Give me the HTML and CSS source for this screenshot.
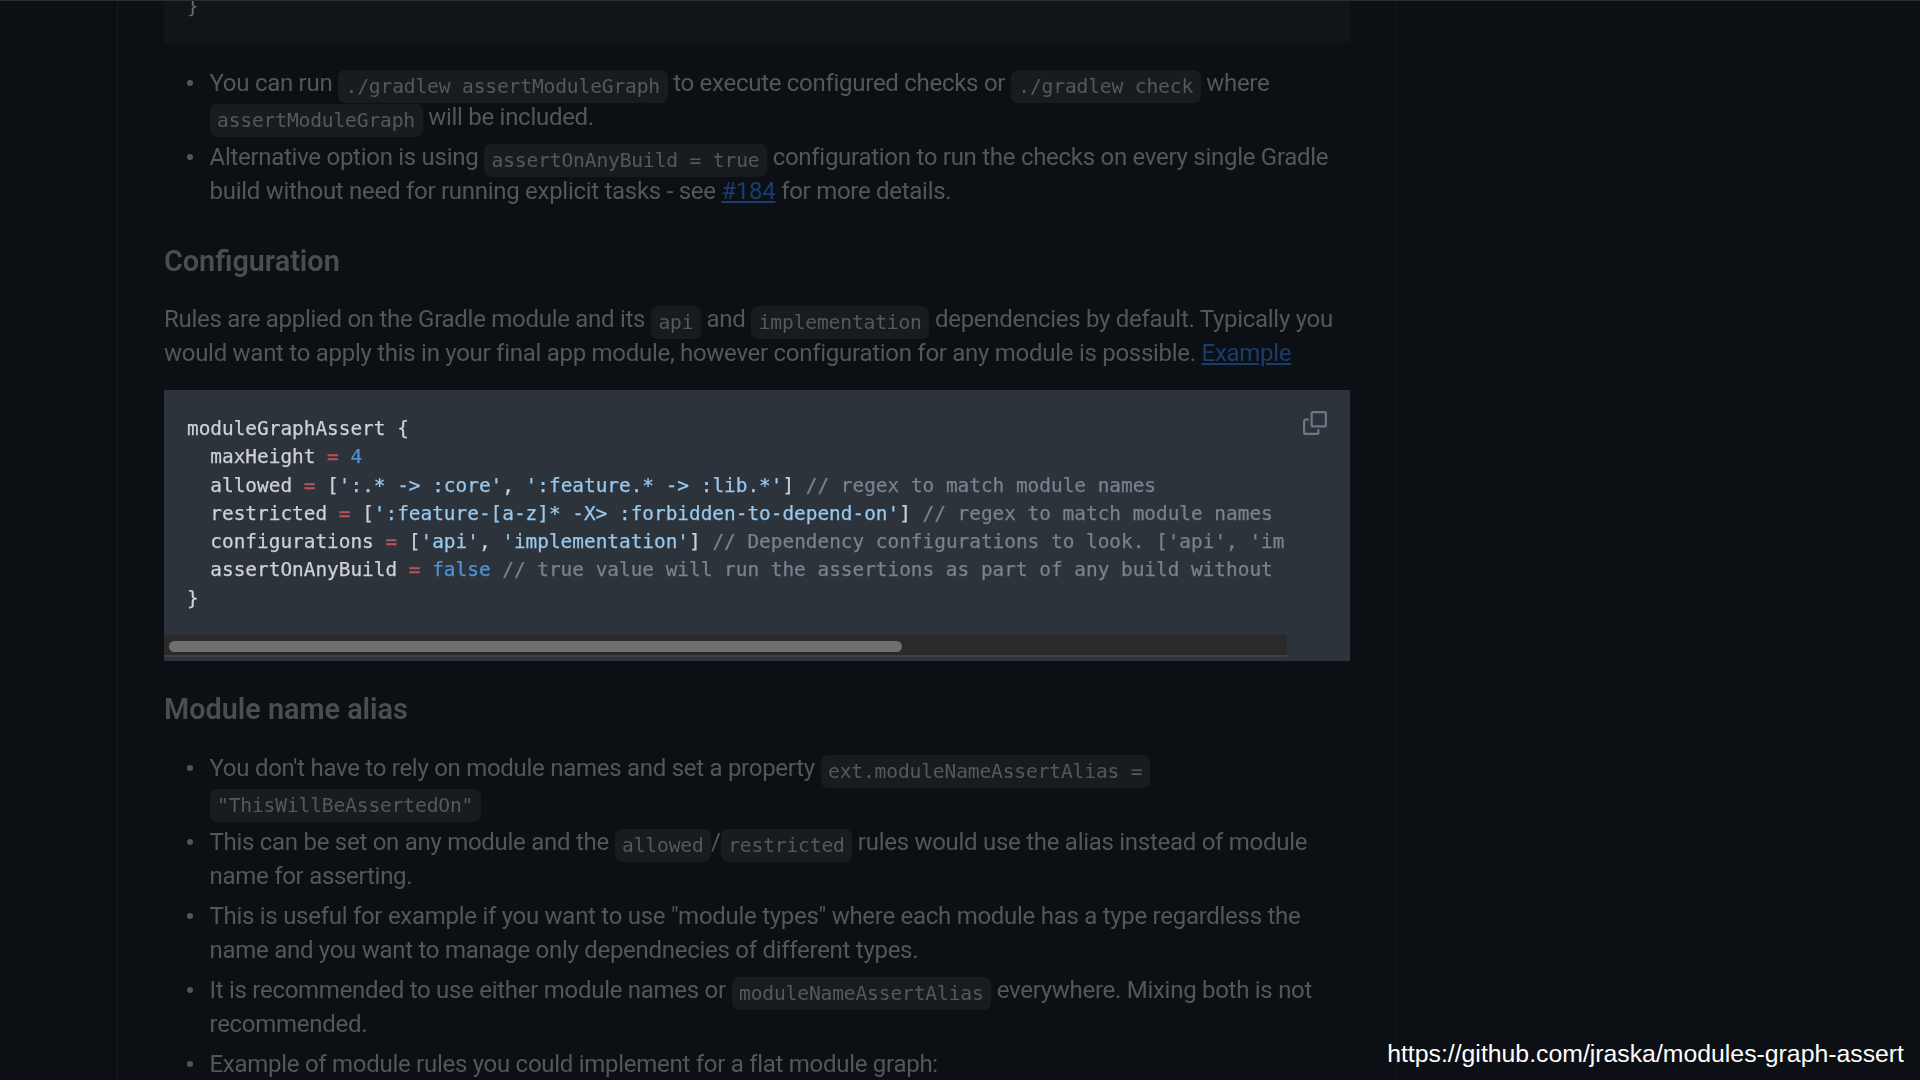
FILE: index.html
```html
<!DOCTYPE html>
<html lang="en">
<head>
<meta charset="utf-8">
<title>modules-graph-assert</title>
<link rel="stylesheet" href="styles.css">
</head>
<body>
<div class="frame">
  <main class="doc">
    <div class="prev-code"><span>}</span></div>
    <ul class="list first">
      <li>You can run <code>./gradlew assertModuleGraph</code> to execute configured checks or <code>./gradlew check</code> where<br><code>assertModuleGraph</code> will be included.</li>
      <li>Alternative option is using <code>assertOnAnyBuild = true</code> configuration to run the checks on every single Gradle<br>build without need for running explicit tasks - see <a href="#">#184</a> for more details.</li>
    </ul>
    <h2 class="heading config">Configuration</h2>
    <p class="para">Rules are applied on the Gradle module and its <code>api</code> and <code>implementation</code> dependencies by default. Typically you<br>would want to apply this in your final app module, however configuration for any module is possible. <a href="#">Example</a></p>
    <div class="block">
      <div class="scroller">
<pre class="src">moduleGraphAssert {
  maxHeight <span class="op">=</span> <span class="num">4</span>
  allowed <span class="op">=</span> [<span class="str">':.* -&gt; :core'</span>, <span class="str">':feature.* -&gt; :lib.*'</span>] <span class="com">// regex to match module names</span>
  restricted <span class="op">=</span> [<span class="str">':feature-[a-z]* -X&gt; :forbidden-to-depend-on'</span>] <span class="com">// regex to match module names</span>
  configurations <span class="op">=</span> [<span class="str">'api'</span>, <span class="str">'implementation'</span>] <span class="com">// Dependency configurations to look. ['api', 'im</span>
  assertOnAnyBuild <span class="op">=</span> <span class="num">false</span> <span class="com">// true value will run the assertions as part of any build without</span>
}</pre>
        <div class="track"><div class="thumb"></div></div>
      </div>
      <svg class="copy" viewBox="0 0 16 16" width="24" height="24" aria-hidden="true">
        <path d="M0 6.75C0 5.784.784 5 1.75 5h1.5a.75.75 0 0 1 0 1.5h-1.5a.25.25 0 0 0-.25.25v7.5c0 .138.112.25.25.25h7.5a.25.25 0 0 0 .25-.25v-1.5a.75.75 0 0 1 1.5 0v1.5A1.75 1.75 0 0 1 9.25 16h-7.5A1.75 1.75 0 0 1 0 14.25Z"/>
        <path d="M5 1.75C5 .784 5.784 0 6.75 0h7.5C15.216 0 16 .784 16 1.75v7.5A1.75 1.75 0 0 1 14.25 11h-7.5A1.75 1.75 0 0 1 5 9.25Zm1.75-.25a.25.25 0 0 0-.25.25v7.5c0 .138.112.25.25.25h7.5a.25.25 0 0 0 .25-.25v-7.5a.25.25 0 0 0-.25-.25Z"/>
      </svg>
    </div>
    <h2 class="heading alias">Module name alias</h2>
    <ul class="list">
      <li>You don't have to rely on module names and set a property <code>ext.moduleNameAssertAlias =</code><br><code>"ThisWillBeAssertedOn"</code></li>
      <li>This can be set on any module and the <code>allowed</code>/<code>restricted</code> rules would use the alias instead of module<br>name for asserting.</li>
      <li>This is useful for example if you want to use "module types" where each module has a type regardless the<br>name and you want to manage only dependnecies of different types.</li>
      <li>It is recommended to use either module names or <code>moduleNameAssertAlias</code> everywhere. Mixing both is not<br>recommended.</li>
      <li>Example of module rules you could implement for a flat module graph:</li>
    </ul>
  </main>
</div>
<div class="url">https://github.com/jraska/modules-graph-assert</div>
</body>
</html>
```
FILE: styles.css
```css
html, body {
  margin: 0;
  height: 1080px;
  overflow: hidden;
  background: #0c0f13;
}
body {
  font-family: Roboto, Inter, sans-serif;
  color: #53575b;
  border-top: 1px solid #2b2f33;
  box-sizing: border-box;
}
.frame {
  box-sizing: border-box;
  margin-left: 117px;
  width: 1280px;
  height: 1080px;
  padding-left: 46px;
  border-left: 1px solid #16191d;
  border-right: 1px solid #16191d;
  overflow: hidden;
}
.doc {
  width: 1186px;
  font-size: 24px;
  line-height: 34.3px;
  letter-spacing: -0.28px;
  white-space: nowrap;
  filter: blur(0.5px);
}
.prev-code {
  height: 42px;
  background: #111418;
  font-family: "DejaVu Sans Mono", monospace;
  font-size: 19px;
  letter-spacing: 0;
  color: #6a6e72;
  padding-left: 23px;
  line-height: 14px;
  overflow: hidden;
}
.prev-code span { display: block; margin-top: -2px; }
.list {
  margin: 0;
  padding-left: 45.5px;
  list-style: none;
}
.list.first { margin-top: 23px; }
.list li { position: relative; margin-top: 5.5px; }
.list li::before {
  content: "";
  position: absolute;
  left: -23px;
  top: 14px;
  width: 6px;
  height: 6px;
  border-radius: 50%;
  background: #53575b;
}
.list li:first-child { margin-top: 0; }
code {
  font-family: "DejaVu Sans Mono", monospace;
  font-size: 19.6px;
  line-height: 1;
  letter-spacing: -0.15px;
  color: #55595d;
  background: #181b20;
  border-radius: 7px;
  padding: 5px 7.5px;
  vertical-align: -2px;
}
a { color: #1a3d6e; text-decoration: underline; }
.heading {
  margin: 0;
  font-size: 28.8px;
  line-height: 36px;
  letter-spacing: 0;
  font-weight: 600;
  color: #4a4e52;
}
.heading.config { margin-top: 34.5px; }
.para { margin: 22.5px 0 0; }
.block {
  position: relative;
  margin-top: 20px;
  height: 271px;
  background: #2d333b;
}
.scroller {
  width: 1123px;
  height: 271px;
  display: flex;
  flex-direction: column;
  overflow: hidden;
}
.src {
  margin: 0;
  flex: 1;
  padding: 25px 0 0 23px;
  font-family: "DejaVu Sans Mono", monospace;
  font-size: 19.4px;
  line-height: 28.2px;
  letter-spacing: 0;
  -webkit-text-stroke: 0.25px;
  color: #ced2d6;
  white-space: pre;
  overflow: hidden;
}
.op { color: #b9525a; }
.num { color: #4f93d6; }
.str { color: #98c8ee; }
.com { color: #79838d; }
.track {
  height: 22px;
  margin-bottom: 4px;
  background: #2a2a2b;
  border-bottom: 2px solid #3d4044;
  box-sizing: border-box;
  padding: 6px 0 0 5px;
}
.thumb {
  width: 733px;
  height: 11px;
  border-radius: 6px;
  background: #6f6f70;
}
.copy {
  position: absolute;
  top: 21px;
  right: 23px;
  fill: #6e7681;
}
.heading.alias { margin-top: 30px; }
.alias + .list { margin-top: 23.5px; }
.url {
  position: absolute;
  right: 16px;
  bottom: 11px;
  font-family: "Liberation Sans", Arial, sans-serif;
  font-size: 24.8px;
  line-height: 30px;
  color: #fff;
}
```
